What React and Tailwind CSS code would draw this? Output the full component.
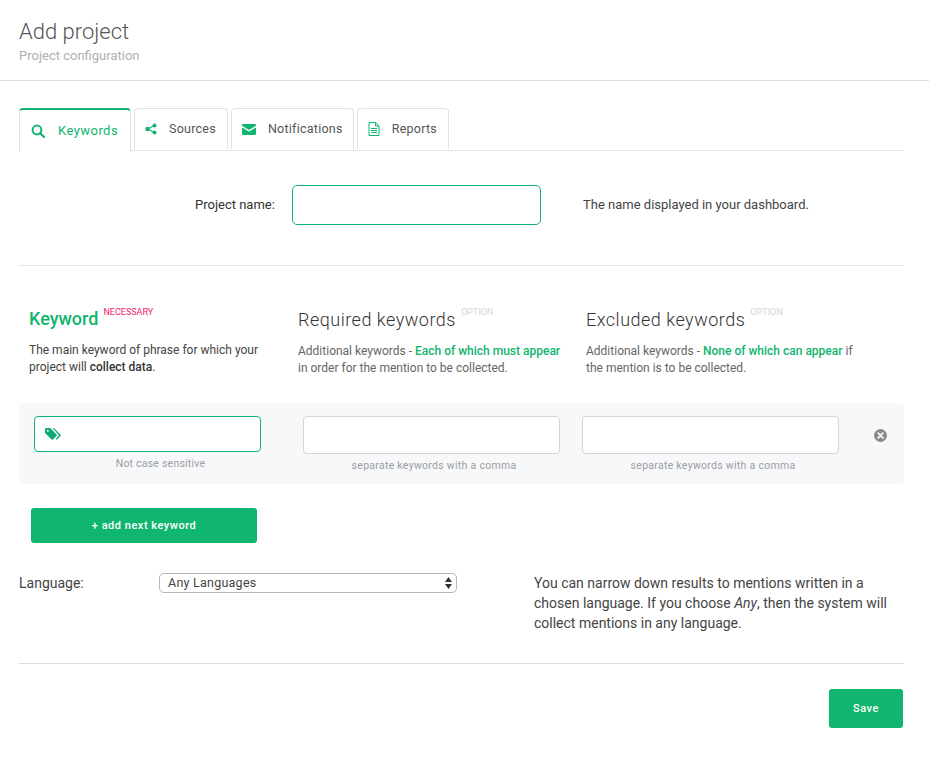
import React from "react";

function Tab({ active, icon, label, gap, pr }) {
  return (
    <div
      className={
        active
          ? "flex h-[44px] w-[112px] items-center rounded-t-[4px] border border-b-0 border-[#e2e2e2] border-t-2 border-t-[#10b56f] bg-white pl-[11px] text-[13px] tracking-[0.45px] text-[#10b56f] relative -mb-px"
          : `flex h-[41px] items-center rounded-t-[4px] border border-b-0 border-[#e2e2e2] bg-white pl-[10px] ${pr} text-[12.5px] tracking-[0.25px] text-[#555]`
      }
    >
      <span className={gap}>{icon}</span>
      {label}
    </div>
  );
}

const Search = () => (
  <svg width="14" height="14" viewBox="0 0 14 14" fill="none" stroke="#10b56f" strokeWidth="2">
    <circle cx="6" cy="6" r="4.4" />
    <path d="M9.2 9.2 13 13" strokeLinecap="round" strokeWidth="2.2" />
  </svg>
);
const Share = () => (
  <svg width="12" height="12" viewBox="0 0 12 12" fill="#10b56f" stroke="#10b56f">
    <path d="M9.5 2.5 2.5 6l7 3.5" fill="none" strokeWidth="1.2" />
    <circle cx="9.5" cy="2.5" r="2" stroke="none" />
    <circle cx="2.5" cy="6" r="2.2" stroke="none" />
    <circle cx="9.5" cy="9.5" r="2" stroke="none" />
  </svg>
);
const Mail = () => (
  <svg width="14" height="11" viewBox="0 0 14 11" fill="#10b56f">
    <path d="M1 0h12a1 1 0 0 1 1 1v.8L7 5.9 0 1.8V1a1 1 0 0 1 1-1Z" />
    <path d="M0 3.4 7 7.5l7-4.1V10a1 1 0 0 1-1 1H1a1 1 0 0 1-1-1Z" />
  </svg>
);
const Doc = () => (
  <svg width="12" height="14" viewBox="0 0 12 14" fill="none" stroke="#10b56f" strokeWidth="1">
    <path d="M1 .5h6.5L11 4v9.5H1Z" />
    <path d="M7.5.5V4H11M3 6.5h6M3 8.5h6M3 10.5h6" />
  </svg>
);
const TagIcon = () => (
  <svg width="16" height="13" viewBox="0 0 16 13" fill="#10a878">
    <path d="M0 1.2C0 .5.5 0 1.2 0h4l6.4 6.4a1 1 0 0 1 0 1.4L8 11.4a1 1 0 0 1-1.4 0L0 5Z" />
    <path d="M7.4 0h1.3l6.8 6.6a1 1 0 0 1 0 1.4l-3.8 3.8-1-.9 3.3-3.6Z" />
    <circle cx="2.8" cy="2.8" r="1" fill="#fff" />
  </svg>
);
const ClearIcon = () => (
  <svg width="13" height="13" viewBox="0 0 13 13">
    <circle cx="6.5" cy="6.5" r="6.5" fill="#8a8a8a" />
    <path d="M4.2 4.2l4.6 4.6M8.8 4.2 4.2 8.8" stroke="#f7f8fa" strokeWidth="1.8" strokeLinecap="round" />
  </svg>
);

function Heading({ title, tag, green }) {
  return (
    <div className="flex h-[32px] items-start">
      <span className={green ? "text-[18px] font-medium leading-[30px] text-[#10b56f]" : "text-[18px] font-light leading-[32px] tracking-[0.5px] text-[#333]"}>{title}</span>
      <span className={green ? "ml-[5px] mt-[2px] text-[9px] leading-[12px] text-[#f0225f]" : "ml-[5px] mt-[2px] text-[9px] leading-[12px] text-[#d2d4da]"}>{tag}</span>
    </div>
  );
}

function KeywordField({ w, note, active }) {
  return (
    <div style={{ width: w }}>
      <div
        className={
          active
            ? "flex h-[36px] items-center rounded-[4px] border border-[#10b56f] bg-white pl-[10px]"
            : "h-[38px] rounded-[4px] border border-[#d5d5d5] bg-white"
        }
      >
        {active && <TagIcon />}
      </div>
      <div className={active ? "mt-[5px] pl-[26px] text-center text-[10.5px] leading-[14px] tracking-[0.22px] text-[#9a9da3]" : "mt-[5px] pl-[5px] text-center text-[10.5px] leading-[14px] tracking-[0.28px] text-[#9a9da3]"}>{note}</div>
    </div>
  );
}

export default function App() {
  return (
    <div className="h-[760px] w-[929px] overflow-hidden bg-white font-['Roboto',sans-serif] text-[#333]">
      <div className="h-[81px] border-b border-[#dcdcdc] pl-[19px] pt-[18px]">
        <h1 className="text-[22px] font-light leading-[28px] text-[#555]">Add project</h1>
        <p className="mt-[1px] text-[13px] leading-[18px] text-[#b0b0b0]">Project configuration</p>
      </div>

      <div className="mx-[19px] w-[885px]">
        <div className="mt-[27px] flex h-[43px] items-start gap-[3px] border-b border-[#e2e2e2]">
          <Tab active icon={<Search />} label="Keywords" gap="mr-[13px] flex w-[14px] justify-center" />
          <Tab icon={<Share />} label="Sources" pr="pr-[11px]" gap="mr-[12px] flex w-[12px] justify-center" />
          <Tab icon={<Mail />} label="Notifications" pr="pr-[10px]" gap="mr-[12px] flex w-[14px] justify-center" />
          <Tab icon={<Doc />} label="Reports" pr="pr-[11px]" gap="mr-[12px] flex w-[12px] justify-center" />
        </div>

        <div className="flex h-[115px] items-center border-b border-[#e2e2e2] pb-[7px]">
          <label className="ml-[176px] w-[97px] text-[13px] text-[#333]">Project name:</label>
          <div className="h-[40px] w-[249px] rounded-[5px] border border-[#10b56f] bg-white" />
          <p className="ml-[42px] text-[13px] text-[#444]">The name displayed in your dashboard.</p>
        </div>

        <div className="mt-[38px] flex h-[99px]">
          <div className="ml-[10px] w-[269px]">
            <Heading green title="Keyword" tag="NECESSARY" />
            <p className="mt-[6px] w-[240px] text-[12px] leading-[17px] text-[#444]">
              The main keyword of phrase for which your project will <b className="font-medium text-[#333]">collect data</b>.
            </p>
          </div>
          <div className="w-[288px]">
            <Heading title="Required keywords" tag="OPTION" />
            <p className="mt-[7px] w-[270px] text-[12px] leading-[17px] text-[#666]">
              Additional keywords - <b className="font-medium text-[#10b56f]">Each of which must appear</b> in order for the mention to be collected.
            </p>
          </div>
          <div className="w-[280px]">
            <Heading title="Excluded keywords" tag="OPTION" />
            <p className="mt-[7px] w-[270px] text-[12px] leading-[17px] text-[#666]">
              Additional keywords - <b className="font-medium text-[#10b56f]">None of which can appear</b> if the mention is to be collected.
            </p>
          </div>
        </div>

        <div className="flex h-[81px] items-start rounded-[4px] bg-[#f7f8fa] pl-[15px] pt-[13px]">
          <KeywordField active w={227} note="Not case sensitive" />
          <div className="ml-[42px]"><KeywordField w={257} note="separate keywords with a comma" /></div>
          <div className="ml-[22px]"><KeywordField w={257} note="separate keywords with a comma" /></div>
          <div className="ml-[35px] mt-[13px]"><ClearIcon /></div>
        </div>

        <button className="ml-[12px] mt-[24px] flex h-[35px] w-[226px] items-center justify-center rounded-[3px] bg-[#10b56f] pt-px text-[11px] font-medium tracking-[0.52px] text-white">
          + add next keyword
        </button>

        <div className="mt-[30px] flex h-[90px] items-start">
          <label className="w-[140px] text-[14px] leading-[20px] text-[#444]">Language:</label>
          <div className="flex h-[20px] w-[298px] items-center justify-between rounded-[5px] border border-[#b5b5b5] bg-white pl-[8px] pr-[4px] text-[12.5px] tracking-[0.24px] text-[#444]">
            <span>Any Languages</span>
            <svg width="7" height="12" viewBox="0 0 7 12" fill="#333">
              <path d="M3.5 0 7 5H0ZM0 7h7l-3.5 5Z" />
            </svg>
          </div>
          <p className="ml-[77px] w-[370px] text-[14px] leading-[20px] text-[#444]">
            You can narrow down results to mentions written in a chosen language. If you choose <i>Any</i>, then the system will collect mentions in any language.
          </p>
        </div>

        <div className="border-t border-[#dcdcdc] pt-[25px]">
          <button className="ml-[810px] flex h-[39px] w-[74px] items-center justify-center rounded-[3px] bg-[#10b56f] pt-px text-[11px] font-medium tracking-[0.5px] text-white">
            Save
          </button>
        </div>
      </div>
    </div>
  );
}
